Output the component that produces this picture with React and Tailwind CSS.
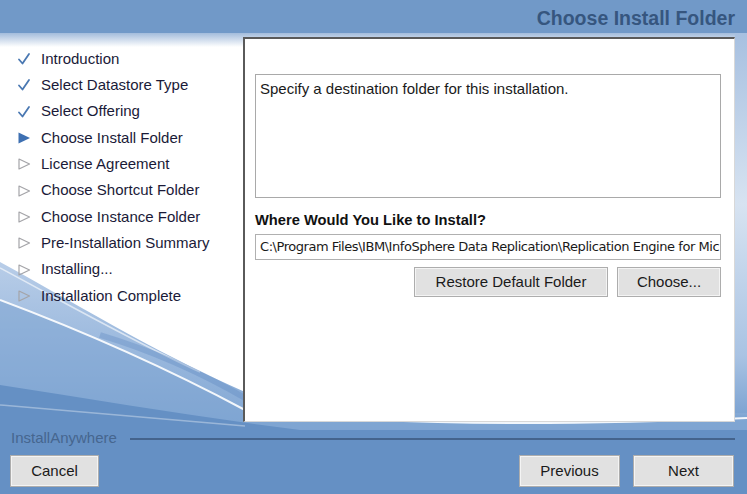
import React from "react";

function Check() {
  return (
    <svg width="14" height="14" viewBox="0 0 14 14">
      <path d="M2 7.5 L5.5 11.5 L12 2" fill="none" stroke="#4a78b2" strokeWidth="1.8" strokeLinecap="round" strokeLinejoin="round" />
    </svg>
  );
}
function Filled() {
  return (
    <svg width="14" height="14" viewBox="0 0 14 14">
      <path d="M1.5 1.5 L13 7 L1.5 12.5 Z" fill="#3e70b2" />
    </svg>
  );
}
function Outline() {
  return (
    <svg width="14" height="14" viewBox="0 0 14 14">
      <path d="M2 2 L12.5 7 L2 12 Z" fill="none" stroke="#a4a4a8" strokeWidth="1.2" strokeLinejoin="round" />
    </svg>
  );
}

const steps = [
  ["Introduction", "check"],
  ["Select Datastore Type", "check"],
  ["Select Offering", "check"],
  ["Choose Install Folder", "current"],
  ["License Agreement", "todo"],
  ["Choose Shortcut Folder", "todo"],
  ["Choose Instance Folder", "todo"],
  ["Pre-Installation Summary", "todo"],
  ["Installing...", "todo"],
  ["Installation Complete", "todo"],
];

function Btn({ children, className = "" }) {
  return (
    <div
      className={
        "flex items-center justify-center bg-[#e1e1e1] border border-[#adadad] shadow-[inset_0_0_0_1px_#f4f4f4] text-[15px] text-[#1a1a1a] " +
        className
      }
    >
      {children}
    </div>
  );
}

function Background() {
  return (
    <svg className="absolute inset-0" width="747" height="494" viewBox="0 0 747 494">
      <defs>
        <linearGradient id="top" x1="0" y1="0" x2="0" y2="1">
          <stop offset="0" stopColor="#a3bcdc" />
          <stop offset="1" stopColor="#ffffff" />
        </linearGradient>
        <linearGradient id="mid" x1="0" y1="0" x2="0" y2="1">
          <stop offset="0" stopColor="#b8cde8" />
          <stop offset="0.5" stopColor="#91b2da" />
          <stop offset="1" stopColor="#6a95c8" />
        </linearGradient>
        <linearGradient id="right" x1="0" y1="0" x2="0" y2="1">
          <stop offset="0" stopColor="#a7c0e0" />
          <stop offset="0.45" stopColor="#d7e3f1" />
          <stop offset="0.85" stopColor="#a9c3e3" />
          <stop offset="1" stopColor="#7ea4d2" />
        </linearGradient>
      </defs>
      <rect x="0" y="0" width="747" height="494" fill="#ffffff" />
      <path d="M0 245 L0 280 C 30 300 50 330 0 360 Z" fill="#d5e2f2" opacity="0.6" />
      <path d="M0 262 C 70 300 150 350 245 392 C 420 420 600 410 747 395 L747 494 L0 494 Z" fill="url(#mid)" />
      <path d="M0 300 C 80 330 170 370 245 410 C 400 425 600 420 747 415 L747 494 L0 494 Z" fill="#7ea4d1" opacity="0.55" />
      <path d="M0 385 C 100 400 200 418 300 430 L747 430 L747 494 L0 494 Z" fill="#6590c4" />
      <path d="M0 300 C 80 330 170 370 245 410 C 400 428 600 424 747 418" fill="none" stroke="#ffffff" strokeOpacity="0.9" strokeWidth="2" />
      <path d="M0 268 C 60 300 130 340 200 372" fill="none" stroke="#ffffff" strokeOpacity="0.6" strokeWidth="1.5" />
      <path d="M100 335 C 150 350 200 372 245 398" fill="none" stroke="#5d88c0" strokeOpacity="0.35" strokeWidth="6" />
      <path d="M0 405 C 80 412 160 418 245 426" fill="none" stroke="#ffffff" strokeOpacity="0.35" strokeWidth="1.5" />
      <rect x="0" y="33" width="747" height="14" fill="url(#top)" />
      <rect x="735" y="33" width="12" height="380" fill="url(#right)" />
      <rect x="0" y="0" width="747" height="33" fill="#7199c8" />
    </svg>
  );
}

export default function App() {
  return (
    <div
      className="relative w-[747px] h-[494px] overflow-hidden"
      style={{ fontFamily: '"Liberation Sans", Arial, sans-serif' }}
    >
      <Background />
      <div className="relative flex flex-col h-full">
        <div className="h-[37px] flex justify-end pr-[12px] pt-[4px]">
          <div className="text-[19.5px] font-bold text-[#36567f] leading-[28px]">Choose Install Folder</div>
        </div>
        <div className="flex h-[385px]">
          <div className="w-[243px] pt-[9px] pl-[17px]">
            {steps.map(([label, kind]) => (
              <div key={label} className="flex items-center h-[26.3px]">
                <div className="w-[24px] flex items-center">
                  {kind === "check" ? <Check /> : kind === "current" ? <Filled /> : <Outline />}
                </div>
                <span className="text-[15px] text-[#1a1a38]">{label}</span>
              </div>
            ))}
          </div>
          <div className="w-[492px] bg-white border-l-2 border-t-2 border-l-[#5a5a5a] border-t-[#5a5a5a] border-r border-b border-r-[#d8d8d8] border-b-[#d8d8d8] pl-[10px] pr-[13px] pt-[35px]">
            <div className="h-[124px] border border-[#a9a9a9] px-[4px] pt-[3px] text-[15px] text-[#1a1a1a]">
              Specify a destination folder for this installation.
            </div>
            <div className="mt-[13px] text-[14.7px] font-bold text-[#111] leading-[18px]">
              Where Would You Like to Install?
            </div>
            <div
              className="mt-[5px] h-[26px] border border-[#b0b0b0] px-[4px] flex items-center overflow-hidden whitespace-nowrap text-[13px] text-[#1a1a1a]"
              style={{ fontFamily: '"DejaVu Sans", sans-serif', letterSpacing: "-0.45px" }}
            >
              C:\Program Files\IBM\InfoSphere Data Replication\Replication Engine for Mic
            </div>
            <div className="mt-[7px] flex justify-end gap-[9px]">
              <Btn className="w-[194px] h-[30px]">Restore Default Folder</Btn>
              <Btn className="w-[104px] h-[30px]">Choose...</Btn>
            </div>
          </div>
        </div>
        <div className="flex items-center h-[33px] pl-[11px] pr-[12px]">
          <span className="text-[15px] text-[#46668f]">InstallAnywhere</span>
          <div className="flex-1 ml-[13px] h-[2px] bg-[#44638c]" />
        </div>
        <div className="flex items-start pl-[10px] pr-[13px]">
          <Btn className="w-[89px] h-[32px]">Cancel</Btn>
          <div className="flex-1" />
          <Btn className="w-[101px] h-[32px]">Previous</Btn>
          <Btn className="w-[101px] h-[32px] ml-[13px]">Next</Btn>
        </div>
      </div>
    </div>
  );
}
